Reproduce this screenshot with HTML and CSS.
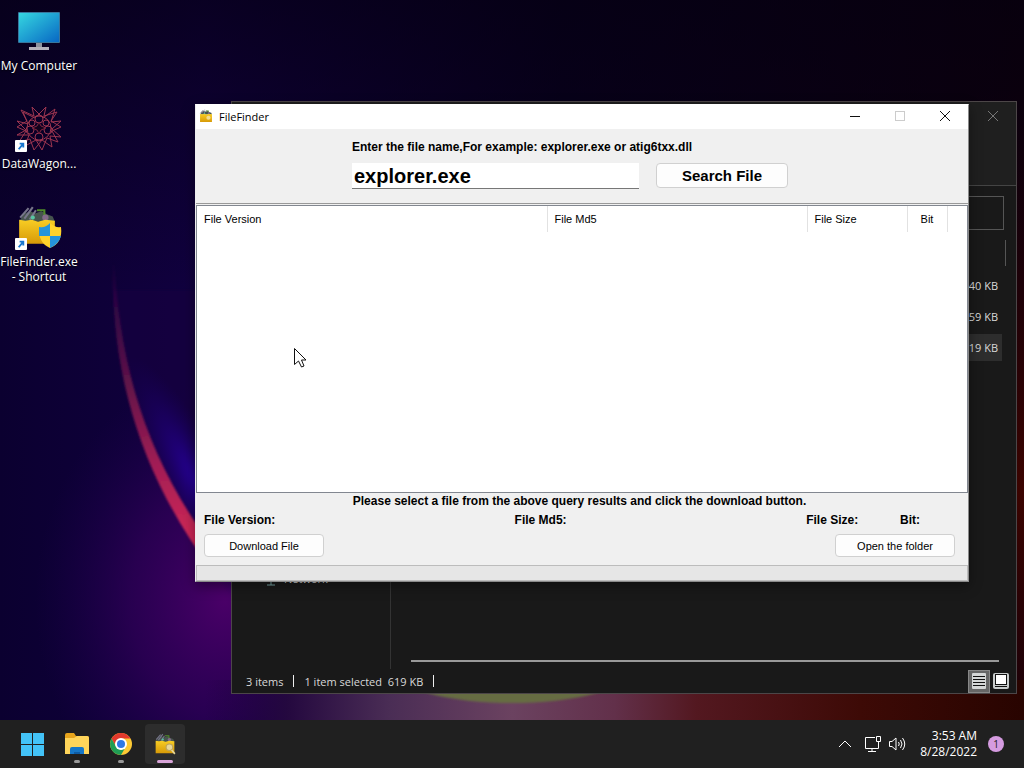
FILE: index.html
```html
<!DOCTYPE html>
<html lang="en">
<head>
  <meta charset="UTF-8" />
  <meta name="viewport" content="width=device-width, initial-scale=1.0" />
  <title>FileFinder</title>
  <link rel="stylesheet" href="styles.css">
</head>
<body>
  <!-- shared icons -->
  <svg class="defs" width="0" height="0" aria-hidden="true">
    <defs>
      <linearGradient id="gold" x1="0" y1="0" x2="0" y2="1">
        <stop offset="0" stop-color="#f8cd24" />
        <stop offset="1" stop-color="#d79a08" />
      </linearGradient>
      <linearGradient id="screen" x1="0" y1="0" x2="1" y2="1">
        <stop offset="0" stop-color="#35d6e0" />
        <stop offset="1" stop-color="#0868c4" />
      </linearGradient>
      <symbol id="folder" viewBox="0 0 40 40">
        <path d="M4 14L8 8L14 6L18 8L24 6L30 9L35 11L37 16H4z" fill="#46544e" />
        <path d="M4 12L12 3M8 13L16 2M13 14L19 5" stroke="#77758a" stroke-width="2" fill="none" />
        <path d="M20 5H27V10" stroke="#4f8a2a" stroke-width="2" fill="none" />
        <circle cx="16" cy="12" r="2" fill="#58c7a2" />
        <circle cx="28" cy="12" r="3" fill="#846a8a" />
        <path d="M3 14L9 15L15 14L21 16L28 14L37 15V37H3z" fill="url(#gold)" />
      </symbol>
      <symbol id="arrow" viewBox="0 0 13 13">
        <rect width="13" height="13" rx="1" fill="#fff" />
        <path d="M4 10L9 4M5 4H9V8" stroke="#1876cf" stroke-width="2" fill="none" />
      </symbol>
    </defs>
  </svg>

  <main class="desktop">
    <svg class="wallpaper" viewBox="0 0 1024 720" preserveAspectRatio="none" aria-hidden="true">
      <defs>
        <linearGradient id="base" x1="0" y1="0" x2="1" y2="0">
          <stop offset="0" stop-color="#0b0030" />
          <stop offset="0.2" stop-color="#110040" />
          <stop offset="0.55" stop-color="#09001f" />
          <stop offset="1" stop-color="#0e000c" />
        </linearGradient>
        <linearGradient id="top" x1="0" y1="0" x2="0" y2="1">
          <stop offset="0" stop-color="#04000f" stop-opacity="0.6" />
          <stop offset="0.4" stop-color="#04000f" stop-opacity="0" />
        </linearGradient>
        <linearGradient id="floor" x1="0" y1="0" x2="1" y2="0">
          <stop offset="0.2" stop-color="#1a0040" stop-opacity="0" />
          <stop offset="0.28" stop-color="#24083f" />
          <stop offset="0.38" stop-color="#4a2d55" />
          <stop offset="0.5" stop-color="#6b4260" />
          <stop offset="0.6" stop-color="#62304a" />
          <stop offset="0.68" stop-color="#531820" />
          <stop offset="0.84" stop-color="#3d0a06" />
          <stop offset="1" stop-color="#280400" />
        </linearGradient>
        <linearGradient id="rim" gradientUnits="userSpaceOnUse" x1="0" y1="260" x2="0" y2="550">
          <stop offset="0" stop-color="#5a1050" stop-opacity="0" />
          <stop offset="0.4" stop-color="#5b1248" />
          <stop offset="0.7" stop-color="#a01d54" />
          <stop offset="1" stop-color="#d82a58" />
        </linearGradient>
        <radialGradient id="violet">
          <stop offset="0" stop-color="#4a0068" />
          <stop offset="0.5" stop-color="#38005e" stop-opacity="0.6" />
          <stop offset="1" stop-color="#200050" stop-opacity="0" />
        </radialGradient>
        <radialGradient id="blue">
          <stop offset="0" stop-color="#2800a0" />
          <stop offset="1" stop-color="#160060" stop-opacity="0" />
        </radialGradient>
        <radialGradient id="red">
          <stop offset="0" stop-color="#3c0400" />
          <stop offset="1" stop-color="#200008" stop-opacity="0" />
        </radialGradient>
        <filter id="soft"><feGaussianBlur stdDeviation="1" /></filter>
      </defs>
      <rect width="1024" height="720" fill="url(#base)" />
      <rect width="1024" height="720" fill="url(#top)" />
      <ellipse cx="225" cy="600" rx="190" ry="230" fill="url(#violet)" />
      <ellipse cx="1024" cy="490" rx="300" ry="400" fill="url(#red)" />
      <path d="M113 290C116 380 150 470 240 590H400V290z" fill="#120040" opacity="0.7" filter="url(#soft)" />
      <ellipse cx="200" cy="490" rx="34" ry="150" fill="url(#blue)" transform="rotate(-28 200 490)" />
      <path d="M113 250C108 370 142 480 215 574V550C150 465 118 370 114 250z" fill="url(#rim)" filter="url(#soft)" />
      <rect y="680" width="1024" height="40" fill="url(#floor)" />
      <ellipse cx="512" cy="672" rx="115" ry="31" fill="#666c42" filter="url(#soft)" />
    </svg>

    <div class="shortcuts">
      <a class="shortcut" href="#computer">
        <svg width="48" height="48" viewBox="0 0 48 48">
          <path d="M21 36H27V42H21z" fill="#8e929d" />
          <rect x="14" y="41" width="20" height="3" fill="#b5b1bb" />
          <rect x="3" y="6" width="42" height="31" rx="1" fill="#38769c" />
          <rect x="4" y="7" width="40" height="29" fill="url(#screen)" />
        </svg>
        <span>My Computer</span>
      </a>
      <a class="shortcut" href="#datawagon">
        <svg width="48" height="48" viewBox="0 0 48 48">
          <g fill="none" stroke="#9c3550" stroke-width="1">
            <path d="M17 3L28 14L40 5L36 18L46 17L37 25L46 33L35 32L37 43L27 36L19 46L15 35L4 38L11 27L2 23L12 17L6 6L19 12z" />
            <path d="M31 3L20 14L8 8L13 20L2 17L11 26L2 31L14 31L10 42L21 36L27 46L32 34L43 38L37 27L46 23L36 17L42 8L29 12z" />
            <circle cx="24" cy="24" r="12" />
            <circle cx="24" cy="15" r="4" />
            <circle cx="31" cy="19" r="3" />
            <circle cx="33" cy="26" r="4" />
            <circle cx="24" cy="33" r="4" />
            <circle cx="15" cy="26" r="4" />
            <circle cx="17" cy="19" r="3" />
          </g>
          <path d="M24 18L26 22L31 24L26 26L24 30L22 26L17 24L22 22z" fill="#12021c" stroke="#7f243f" />
          <use href="#arrow" x="0" y="36" width="12" height="12" />
        </svg>
        <span>DataWagon...</span>
      </a>
      <a class="shortcut" href="#filefinder">
        <svg width="48" height="48" viewBox="0 0 48 48">
          <use href="#folder" x="1" y="3" width="42" height="42" />
          <path d="M35 21Q40 26 46 25Q48 41 35 46Q23 41 24 25Q31 26 35 21z" fill="#ffd22b" />
          <path d="M35 21V34H24V25Q31 26 35 21z" fill="#2595db" />
          <path d="M35 34H46Q44 42 35 46z" fill="#2595db" />
          <use href="#arrow" x="0" y="36" width="12" height="12" />
        </svg>
        <span>FileFinder.exe - Shortcut</span>
      </a>
    </div>

    <section class="explorer">
      <header class="explorer-top">
        <button class="explorer-close" aria-label="Close">
          <svg width="12" height="12" viewBox="0 0 12 12"><path d="M1 1L11 11M11 1L1 11" /></svg>
        </button>
      </header>
      <div class="explorer-nav"><input type="text" aria-label="Search" /></div>
      <div class="explorer-body">
        <nav class="sidebar">
          <a href="#network">
            <svg width="14" height="14" viewBox="0 0 14 14"><path d="M1 1H13V10H1z" fill="#4d9c9c" /><path d="M7 10V13M3 13H11" stroke="#7aa8a8" fill="none" /></svg>
            Network
          </a>
        </nav>
        <div class="files">
          <div class="files-head"></div>
          <div class="file">40 KB</div>
          <div class="file">59 KB</div>
          <div class="file selected">19 KB</div>
          <div class="scrollbar"></div>
        </div>
      </div>
      <footer class="explorer-status">
        <span class="status-item">3 items</span>
        <span class="status-item">1 item selected&nbsp; 619 KB</span>
        <div class="views">
          <button class="active" aria-label="Details view">
            <svg width="16" height="18" viewBox="0 0 16 18"><rect x="1" y="1" width="14" height="16" rx="1" fill="#d4d6d6" /><path d="M2 4.5H14M2 7.5H14M2 10.5H14M2 13.5H14" stroke="#111" /></svg>
          </button>
          <button aria-label="Large icons view">
            <svg width="16" height="16" viewBox="0 0 16 16"><rect width="16" height="16" rx="2" fill="#c8cccc" /><rect x="2.5" y="1.5" width="11" height="10" fill="#fff" stroke="#111" /><path d="M2 13.5H14" stroke="#111" /></svg>
          </button>
        </div>
      </footer>
    </section>

    <section class="finder">
      <header class="titlebar">
        <svg width="14" height="14" viewBox="0 0 40 40"><use href="#folder" width="40" height="40" /><circle cx="27" cy="25" r="6" fill="#f3dc90" /></svg>
        <span>FileFinder</span>
        <div class="window-buttons">
          <button aria-label="Minimize"><svg width="12" height="12" viewBox="0 0 12 12"><path d="M1 6.5H11" /></svg></button>
          <button aria-label="Maximize" disabled><svg width="12" height="12" viewBox="0 0 12 12"><rect x="1.5" y="1.5" width="9" height="9" /></svg></button>
          <button aria-label="Close"><svg width="12" height="12" viewBox="0 0 12 12"><path d="M1 1L11 11M11 1L1 11" /></svg></button>
        </div>
      </header>

      <form class="search">
        <label for="fileName">Enter the file name,For example: explorer.exe or atig6txx.dll</label>
        <div class="search-row">
          <input id="fileName" type="text" value="explorer.exe" />
          <button type="button">Search File</button>
        </div>
      </form>

      <div class="results">
        <table>
          <thead>
            <tr>
              <th>File Version</th>
              <th class="md5">File Md5</th>
              <th class="size">File Size</th>
              <th class="bit">Bit</th>
              <td class="rest"></td>
            </tr>
          </thead>
        </table>
      </div>

      <div class="details">
        <p>Please select a file from the above query results and click the download button.</p>
        <div class="info">
          <span>File Version:</span>
          <span>File Md5:</span>
          <span>File Size:</span>
          <span>Bit:</span>
        </div>
        <div class="actions">
          <button>Download File</button>
          <button>Open the folder</button>
        </div>
      </div>
      <div class="progress"></div>
    </section>

    <svg class="cursor" width="13" height="20" viewBox="0 0 13 20" aria-hidden="true">
      <path d="M.5 .5V16.500L4.500 13L7.500 19L10 18L7.500 12H12z" fill="#fff" stroke="#111" />
    </svg>
  </main>

  <footer class="taskbar">
    <div class="apps">
      <button aria-label="Start">
        <svg width="24" height="24" viewBox="0 0 24 24"><path d="M0 1H11V12H0zM12 1H23V12H12zM0 13H11V24H0zM12 13H23V24H12z" fill="#43c3f7" /></svg>
      </button>
      <button class="open" aria-label="File Explorer">
        <svg width="24" height="24" viewBox="0 0 24 24">
          <path d="M0 3Q0 1 2 1H9L11 4H22Q24 4 24 6V22H0z" fill="#e8a51c" />
          <path d="M0 6H9L12 4H22Q24 4 24 6V22H0z" fill="#ffd55a" />
          <path d="M5 22V17Q5 15 7 15H17Q19 15 19 17V22z" fill="#1677c8" />
          <path d="M9 22V20H15V22z" fill="#0e5ba3" />
        </svg>
      </button>
      <button class="open" aria-label="Chrome">
        <svg width="24" height="24" viewBox="0 0 24 24">
          <circle cx="12" cy="12" r="11" fill="#fcc934" />
          <path d="M2.500 6.500A11 11 0 0 1 21.500 6.500H12A5.500 5.500 0 0 0 7.200 14.700z" fill="#e2392d" />
          <path d="M2.500 6.500L7.200 14.700A5.500 5.500 0 0 0 16.800 14.700L12 23A11 11 0 0 1 2.500 6.500z" fill="#1f9d55" />
          <circle cx="12" cy="12" r="6" fill="#fff" />
          <circle cx="12" cy="12" r="4" fill="#2d78e6" />
        </svg>
      </button>
      <button class="open current" aria-label="FileFinder">
        <svg width="22" height="22" viewBox="0 0 40 40"><use href="#folder" width="40" height="40" /><circle cx="28" cy="26" r="6" fill="#e8d79a" stroke="#bda45a" stroke-width="2" /><path d="M32 31L38 38" stroke="#e8d79a" stroke-width="3" /></svg>
      </button>
    </div>
    <div class="tray">
      <svg width="14" height="14" viewBox="0 0 14 14"><path d="M1 10L7 4L13 10" /></svg>
      <svg width="18" height="18" viewBox="0 0 18 18"><path d="M11 2.500H1.500V13.500H14.500V8M8 13.500V16.500M4 16.500H12M12.500 1.500H16.500V6.500H12.500zM14.500 6.500V9" /></svg>
      <svg width="18" height="18" viewBox="0 0 18 18"><path d="M1.500 6.500H4L8 3V15L4 11.500H1.500zM10.500 7Q12 9 10.500 11M12.500 5Q15.500 9 12.500 13M14.500 3Q19 9 14.500 15" /></svg>
      <div class="clock">3:53 AM<br>8/28/2022</div>
      <span class="badge">1</span>
    </div>
  </footer>
</body>
</html>
```

FILE: styles.css
```css
* {
  box-sizing: border-box;
}

body {
  margin: 0;
  height: 100vh;
  display: flex;
  flex-direction: column;
  overflow: hidden;
  background: #0b0028;
  color: #fff;
  font-family: "Open Sans", "Noto Sans", sans-serif;
  font-size: 12px;
}

button, input {
  font-family: inherit;
  margin: 0;
}

button {
  display: flex;
  align-items: center;
  justify-content: center;
  padding: 0;
  border: none;
  background: none;
}

a {
  color: inherit;
  text-decoration: none;
}

.defs {
  position: absolute;
}

.desktop {
  flex: 1;
  position: relative;
  min-height: 0;
}

.wallpaper {
  position: absolute;
  width: 100%;
  height: 100%;
}

/* desktop icons */
.shortcuts {
  position: relative;
  display: flex;
  flex-direction: column;
  width: 78px;
  padding-top: 6px;
}

.shortcut {
  display: flex;
  flex-direction: column;
  align-items: center;
  gap: 4px;
  min-height: 98px;
  text-align: center;
  line-height: 15px;
  text-shadow: 0 1px 2px #000;
}

/* explorer window in the back */
.explorer {
  position: absolute;
  left: 231px;
  right: 7px;
  top: 101px;
  bottom: 26px;
  display: flex;
  flex-direction: column;
  background: #191919;
  border: 1px solid #4c4648;
  color: #d8d8d8;
  font-size: 11px;
}

.explorer-top {
  display: flex;
  justify-content: flex-end;
  align-items: flex-start;
  height: 84px;
  background: #1f1f1f;
  border-bottom: 1px solid #444;
}

.explorer-close {
  width: 46px;
  height: 28px;
}

.explorer-close svg {
  fill: none;
  stroke: #777;
}

.explorer-nav {
  display: flex;
  justify-content: flex-end;
  padding: 10px 12px;
}

.explorer-nav input {
  width: 240px;
  height: 34px;
  background: #191919;
  border: 1px solid #555;
}

.explorer-body {
  flex: 1;
  display: flex;
  min-height: 0;
}

.sidebar {
  display: flex;
  flex-direction: column;
  justify-content: flex-end;
  width: 159px;
  padding: 0 0 80px 32px;
  border-right: 1px solid #333;
}

.sidebar a {
  display: flex;
  align-items: center;
  gap: 6px;
  line-height: 20px;
}

.files {
  flex: 1;
  display: flex;
  flex-direction: column;
  padding: 0 14px 0 20px;
}

.files-head {
  height: 26px;
  margin: 0 -4px 6px 0;
  border-right: 1px solid #555;
}

.file {
  height: 27px;
  margin-bottom: 4px;
  padding-right: 4px;
  line-height: 27px;
  text-align: right;
}

.selected {
  background: #2d2d2d;
}

.scrollbar {
  height: 2px;
  margin: auto 3px 7px 0;
  background: #999;
}

.explorer-status {
  display: flex;
  align-items: center;
  height: 24px;
  padding-left: 14px;
}

.status-item {
  display: flex;
  align-items: center;
}

.status-item::after {
  content: "";
  width: 1px;
  height: 12px;
  margin: 0 10px;
  background: #eee;
}

.views {
  display: flex;
  margin-left: auto;
  margin-right: 4px;
}

.views button {
  width: 22px;
  height: 23px;
}

.views .active {
  background: #666;
  border: 1px solid #888;
}

/* FileFinder window */
.finder {
  position: absolute;
  left: 195px;
  right: 55px;
  top: 104px;
  bottom: 138px;
  display: flex;
  flex-direction: column;
  background: #f0f0f0;
  border: 1px solid #8a8a8a;
  border-top-color: #fff;
  border-left-color: #eee;
  color: #000;
  font-family: "Liberation Sans", Arial, sans-serif;
  box-shadow: 0 4px 12px rgba(0, 0, 0, 0.4);
}

.titlebar {
  display: flex;
  align-items: center;
  gap: 6px;
  height: 24px;
  padding: 0 1px 2px 3px;
  background: #fff;
  font-family: "Open Sans", "Noto Sans", sans-serif;
  font-size: 11px;
}

.window-buttons {
  display: flex;
  margin-left: auto;
}

.window-buttons button {
  width: 45px;
  height: 22px;
}

.window-buttons svg {
  fill: none;
  stroke: #111;
}

.window-buttons button:disabled svg {
  stroke: #ccc;
}

.search {
  display: flex;
  flex-direction: column;
  gap: 8px;
  padding: 10px 0 14px 156px;
  border-bottom: 1px solid #999;
}

.search label {
  line-height: 16px;
  font-size: 12px;
  font-weight: bold;
}

.search-row {
  display: flex;
  gap: 17px;
}

.search-row input {
  width: 287px;
  height: 26px;
  padding: 2px 2px 0;
  border: none;
  border-bottom: 1px solid #777;
  background: #fff;
  color: #000;
  font-size: 20px;
  font-weight: bold;
}

.search-row button {
  width: 132px;
  height: 25px;
  font-size: 15px;
  font-weight: bold;
}

.search-row button,
.actions button {
  background: #fdfdfd;
  border: 1px solid #d0d0d0;
  border-radius: 4px;
  color: #000;
}

.results {
  flex: 1;
  margin-top: 1px;
  border: 1px solid #828790;
  background: #fff;
}

.results table {
  width: 100%;
  table-layout: fixed;
  border-collapse: collapse;
}

.results th {
  height: 26px;
  padding: 0 7px;
  border-right: 1px solid #e2e2e2;
  font-size: 11px;
  font-weight: normal;
  text-align: left;
}

.results .md5 {
  width: 260px;
}

.results .size {
  width: 100px;
}

.results .bit {
  width: 40px;
  text-align: center;
}

.results .rest {
  width: 20px;
}

.details {
  padding: 0 13px 8px 8px;
  font-size: 12px;
  font-weight: bold;
}

.details p {
  margin: 0 0 3px;
  line-height: 16px;
  text-align: center;
}

.info {
  display: grid;
  grid-template-columns: 311fr 292fr 94fr 55fr;
  line-height: 16px;
}

.actions {
  display: flex;
  justify-content: space-between;
  margin-top: 6px;
}

.actions button {
  width: 120px;
  height: 23px;
  font-size: 11px;
}

.progress {
  height: 16px;
  border: 1px solid #bcbcbc;
  background: #e6e6e6;
}

.cursor {
  position: absolute;
  left: 294px;
  top: 348px;
}

/* taskbar */
.taskbar {
  display: flex;
  justify-content: space-between;
  align-items: center;
  height: 48px;
  padding: 0 20px 0 13px;
  background: #202020;
}

.apps {
  display: flex;
  gap: 4px;
}

.apps button {
  position: relative;
  width: 40px;
  height: 40px;
  border-radius: 4px;
}

.apps .open::after {
  content: "";
  position: absolute;
  bottom: 1px;
  width: 6px;
  height: 3px;
  border-radius: 2px;
  background: #999;
}

.apps .current {
  background: #2d2d2d;
}

.apps .current::after {
  width: 16px;
  background: #d9a5d9;
}

.tray {
  display: flex;
  align-items: center;
}

.tray svg {
  fill: none;
  stroke: #fff;
  margin-right: 6px;
}

.tray svg:first-child {
  margin-right: 12px;
}

.clock {
  margin: 0 11px 0 8px;
  line-height: 16px;
  text-align: right;
}

.badge {
  width: 16px;
  height: 16px;
  border-radius: 50%;
  background: #d59be0;
  color: #222;
  font-size: 10px;
  line-height: 16px;
  text-align: center;
}
```
